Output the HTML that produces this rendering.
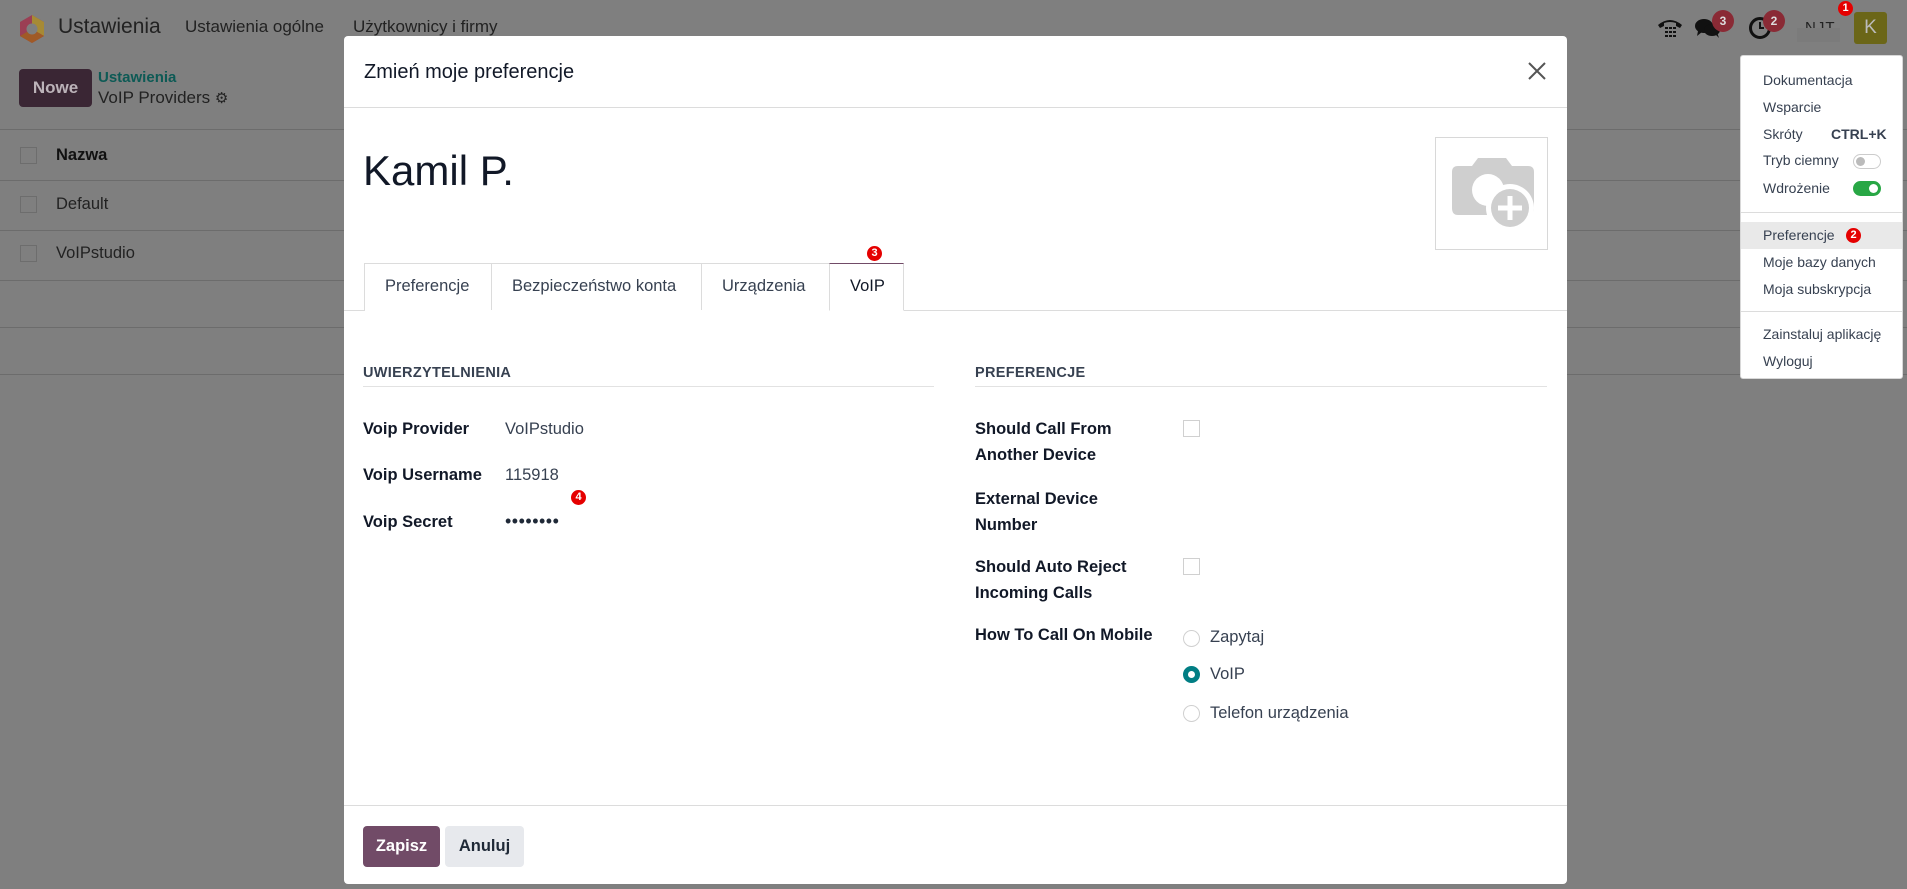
<!DOCTYPE html>
<html><head><meta charset="utf-8"><style>
*{box-sizing:border-box;margin:0;padding:0}
body{width:1907px;height:889px;overflow:hidden;background:#7f7f7f;font-family:"Liberation Sans",sans-serif;position:relative;color:#1f2326}
.a{position:absolute;white-space:nowrap}
.hl{position:absolute;left:0;width:1907px;height:1px;background:#6c6c6c}
.cb{position:absolute;width:17px;height:17px;border:1px solid #6d6d6d}
.badge{position:absolute;border-radius:50%;color:#ddd;font-weight:bold;font-size:12px;text-align:center}
.rb{position:absolute;width:15px;height:15px;border-radius:50%;background:#e50000;color:#fff;font-size:11px;font-weight:bold;text-align:center;line-height:15px}
.modal{position:absolute;left:344px;top:36px;width:1223px;height:848px;background:#fff;border-radius:4px}
.lbl{position:absolute;font-weight:bold;font-size:16.5px;color:#111827;line-height:26px}
.val{position:absolute;font-size:16.5px;color:#374151;line-height:26px}
.dd{position:absolute;left:1740px;top:55px;width:163px;height:324px;background:#fff;border:1px solid #d8d8d8;border-radius:3px}
.di{position:absolute;left:22px;font-size:14px;color:#374151}
</style></head><body>
<svg class="a" style="left:18px;top:14px" width="28" height="30" viewBox="0 0 28 30"><polygon points="14,1 26,8 26,22 14,29 2,22 2,8" fill="#9b3f54"/><polygon points="14,1 26,8 26,22 14,15" fill="#a68a35"/><polygon points="2,22 14,29 26,22 14,15" fill="#a05a26"/><circle cx="14" cy="15" r="5.5" fill="#7f7f7f"/></svg>
<div class="a" style="left:58px;top:15px;font-size:21px;color:#222">Ustawienia</div>
<div class="a" style="left:185px;top:17px;font-size:17px;color:#222">Ustawienia ogólne</div>
<div class="a" style="left:353px;top:17px;font-size:17px;color:#222">Użytkownicy i firmy</div>
<svg class="a" style="left:1656px;top:17px" width="28" height="22" viewBox="0 0 28 22"><path d="M2 8 Q14 -2 26 8 L24 11 L20 9 L20 6 Q14 4 8 6 L8 9 L4 11Z" fill="#111"/><g fill="#111"><rect x="9" y="10" width="3" height="2"/><rect x="13" y="10" width="3" height="2"/><rect x="17" y="10" width="3" height="2"/><rect x="9" y="14" width="3" height="2"/><rect x="13" y="14" width="3" height="2"/><rect x="17" y="14" width="3" height="2"/><rect x="9" y="18" width="3" height="2"/><rect x="13" y="18" width="3" height="2"/><rect x="17" y="18" width="3" height="2"/></g></svg>
<svg class="a" style="left:1695px;top:17px" width="26" height="22" viewBox="0 0 26 22"><ellipse cx="9" cy="9" rx="9" ry="7" fill="#111"/><ellipse cx="17" cy="13" rx="8" ry="6" fill="#111"/><path d="M3 14 L2 19 L7 15Z M20 17 L24 21 L22 15Z" fill="#111"/></svg>
<div class="badge" style="left:1712px;top:10px;width:22px;height:22px;line-height:22px;background:#8a2a35">3</div>
<svg class="a" style="left:1748px;top:16px" width="24" height="24" viewBox="0 0 24 24"><circle cx="12" cy="12" r="9.5" fill="none" stroke="#111" stroke-width="3"/><path d="M12 6 V12 H16" stroke="#111" stroke-width="2" fill="none"/></svg>
<div class="badge" style="left:1763px;top:10px;width:22px;height:22px;line-height:22px;background:#8a2a35">2</div>
<div class="a" style="left:1805px;top:19px;font-size:15px;color:#222;letter-spacing:1px">NJT</div>
<div class="a" style="left:1797px;top:28px;width:43px;height:14px;background:#7b7b7b"></div>
<div class="rb" style="left:1838px;top:1px">1</div>
<div class="a" style="left:1854px;top:12px;width:33px;height:32px;background:#6b6618;border-radius:3px;color:#bbb;font-size:19px;text-align:center;line-height:32px">K</div>
<div class="a" style="left:19px;top:69px;width:73px;height:38px;background:#3a2634;border-radius:4px;color:#bcb3b9;font-weight:bold;font-size:17px;text-align:center;line-height:38px">Nowe</div>
<div class="a" style="left:98px;top:69px;font-size:15px;font-weight:bold;color:#0d5a55">Ustawienia</div>
<div class="a" style="left:98px;top:88px;font-size:17px;color:#222">VoIP Providers <span style="font-size:15px">⚙</span></div>
<div class="hl" style="top:129px"></div><div class="hl" style="top:180px"></div><div class="hl" style="top:230px"></div><div class="hl" style="top:280px"></div><div class="hl" style="top:327px"></div><div class="hl" style="top:374px"></div>
<div class="cb" style="left:20px;top:147px"></div><div class="a" style="left:56px;top:146px;font-size:16.5px;font-weight:bold;color:#111">Nazwa</div>
<div class="cb" style="left:20px;top:196px"></div><div class="a" style="left:56px;top:195px;font-size:16.5px;color:#222">Default</div>
<div class="cb" style="left:20px;top:245px"></div><div class="a" style="left:56px;top:244px;font-size:16.5px;color:#222">VoIPstudio</div>
<div class="modal">
 <div class="a" style="left:20px;top:25px;font-size:20px;color:#111827">Zmień moje preferencje</div>
 <svg class="a" style="left:1183px;top:25px" width="20" height="20" viewBox="0 0 20 20"><path d="M2 2L18 18M18 2L2 18" stroke="#555" stroke-width="2"/></svg>
 <div class="a" style="left:0;top:71px;width:1223px;height:1px;background:#dcdcdc"></div>
 <div class="a" style="left:19px;top:111px;font-size:42px;color:#111827">Kamil P.</div>
 <div class="a" style="left:1091px;top:101px;width:113px;height:113px;border:1px solid #d8d8d8"></div>
 <svg class="a" style="left:1104px;top:116px" width="90" height="80" viewBox="0 0 90 80"><path d="M30 6 H58 L64 14 H80 Q86 14 86 20 V56 Q86 63 80 63 H10 Q4 63 4 56 V20 Q4 14 10 14 H24Z" fill="#cfcfcf"/><circle cx="40" cy="38" r="16" fill="#fff"/><circle cx="62" cy="56" r="24" fill="#fff"/><circle cx="62" cy="56" r="19" fill="#cfcfcf"/><path d="M62 44 V68 M50 56 H74" stroke="#fff" stroke-width="5"/></svg>
 <div class="a" style="left:0;top:274px;width:1223px;height:1px;background:#dcdcdc"></div>
 <div class="a" style="left:20px;top:227px;width:540px;height:48px;border:1px solid #dcdcdc;border-bottom:none;background:#fff"></div>
 <div class="a" style="left:147px;top:227px;width:1px;height:47px;background:#dcdcdc"></div>
 <div class="a" style="left:357px;top:227px;width:1px;height:47px;background:#dcdcdc"></div>
 <div class="a" style="left:485px;top:227px;width:75px;height:48px;border:1px solid #dcdcdc;border-top:1px solid #714b67;border-bottom:1px solid #fff;background:#fff"></div>
 <div class="a" style="left:41px;top:241px;font-size:16.5px;color:#374151">Preferencje</div>
 <div class="a" style="left:168px;top:241px;font-size:16.5px;color:#374151">Bezpieczeństwo konta</div>
 <div class="a" style="left:378px;top:241px;font-size:16.5px;color:#374151">Urządzenia</div>
 <div class="a" style="left:506px;top:241px;font-size:16.5px;color:#111827">VoIP</div>
 <div class="rb" style="left:523px;top:210px">3</div>
 <div class="a" style="left:19px;top:329px;font-size:14.5px;font-weight:bold;color:#374151;letter-spacing:.3px">UWIERZYTELNIENIA</div>
 <div class="a" style="left:19px;top:350px;width:571px;height:1px;background:#e2e2e2"></div>
 <div class="lbl" style="left:19px;top:380px">Voip Provider</div><div class="val" style="left:161px;top:380px">VoIPstudio</div>
 <div class="lbl" style="left:19px;top:426px">Voip Username</div><div class="val" style="left:161px;top:426px">115918</div>
 <div class="rb" style="left:227px;top:454px">4</div>
 <div class="lbl" style="left:19px;top:473px">Voip Secret</div><div class="val" style="left:161px;top:472px;font-size:18px;letter-spacing:0.5px;color:#1f2937">••••••••</div>
 <div class="a" style="left:631px;top:329px;font-size:14.5px;font-weight:bold;color:#374151;letter-spacing:.3px">PREFERENCJE</div>
 <div class="a" style="left:631px;top:350px;width:572px;height:1px;background:#e2e2e2"></div>
 <div class="lbl" style="left:631px;top:380px">Should Call From<br>Another Device</div>
 <div class="a" style="left:839px;top:384px;width:17px;height:17px;border:1px solid #d0d0d0"></div>
 <div class="lbl" style="left:631px;top:450px">External Device<br>Number</div>
 <div class="lbl" style="left:631px;top:518px">Should Auto Reject<br>Incoming Calls</div>
 <div class="a" style="left:839px;top:522px;width:17px;height:17px;border:1px solid #d0d0d0"></div>
 <div class="lbl" style="left:631px;top:586px">How To Call On Mobile</div>
 <div class="a" style="left:839px;top:594px;width:17px;height:17px;border-radius:50%;border:1px solid #d0d0d0"></div>
 <div class="val" style="left:866px;top:588px">Zapytaj</div>
 <div class="a" style="left:839px;top:630px;width:17px;height:17px;border-radius:50%;border:5px solid #017e84;background:#fff"></div>
 <div class="val" style="left:866px;top:625px">VoIP</div>
 <div class="a" style="left:839px;top:669px;width:17px;height:17px;border-radius:50%;border:1px solid #d0d0d0"></div>
 <div class="val" style="left:866px;top:664px">Telefon urządzenia</div>
 <div class="a" style="left:0;top:769px;width:1223px;height:1px;background:#dcdcdc"></div>
 <div class="a" style="left:19px;top:790px;width:77px;height:41px;background:#714b67;border-radius:4px;color:#fff;font-weight:bold;font-size:16.5px;text-align:center;line-height:41px">Zapisz</div>
 <div class="a" style="left:101px;top:790px;width:79px;height:41px;background:#e7e9ed;border-radius:4px;color:#1f2937;font-weight:bold;font-size:16.5px;text-align:center;line-height:41px">Anuluj</div>
</div>
<div class="dd">
 <div class="di" style="top:16px">Dokumentacja</div>
 <div class="di" style="top:43px">Wsparcie</div>
 <div class="di" style="top:70px">Skróty</div><div class="a" style="left:90px;top:70px;font-size:14px;font-weight:bold;color:#374151">CTRL+K</div>
 <div class="di" style="top:96px">Tryb ciemny</div>
 <div class="a" style="left:112px;top:98px;width:28px;height:15px;border:1px solid #ccc;border-radius:8px"><div class="a" style="left:2px;top:2px;width:9px;height:9px;border-radius:50%;background:#bbb"></div></div>
 <div class="di" style="top:124px">Wdrożenie</div>
 <div class="a" style="left:112px;top:125px;width:28px;height:15px;background:#28a745;border-radius:8px"><div class="a" style="left:16px;top:3px;width:9px;height:9px;border-radius:50%;background:#fff"></div></div>
 <div class="a" style="left:0;top:156px;width:161px;height:1px;background:#dcdcdc"></div>
 <div class="a" style="left:0;top:166px;width:161px;height:27px;background:#e9e9e9"></div>
 <div class="di" style="top:171px">Preferencje</div>
 <div class="rb" style="left:105px;top:172px">2</div>
 <div class="di" style="top:198px">Moje bazy danych</div>
 <div class="di" style="top:225px">Moja subskrypcja</div>
 <div class="a" style="left:0;top:255px;width:161px;height:1px;background:#dcdcdc"></div>
 <div class="di" style="top:270px">Zainstaluj aplikację</div>
 <div class="di" style="top:297px">Wyloguj</div>
</div>
</body></html>
